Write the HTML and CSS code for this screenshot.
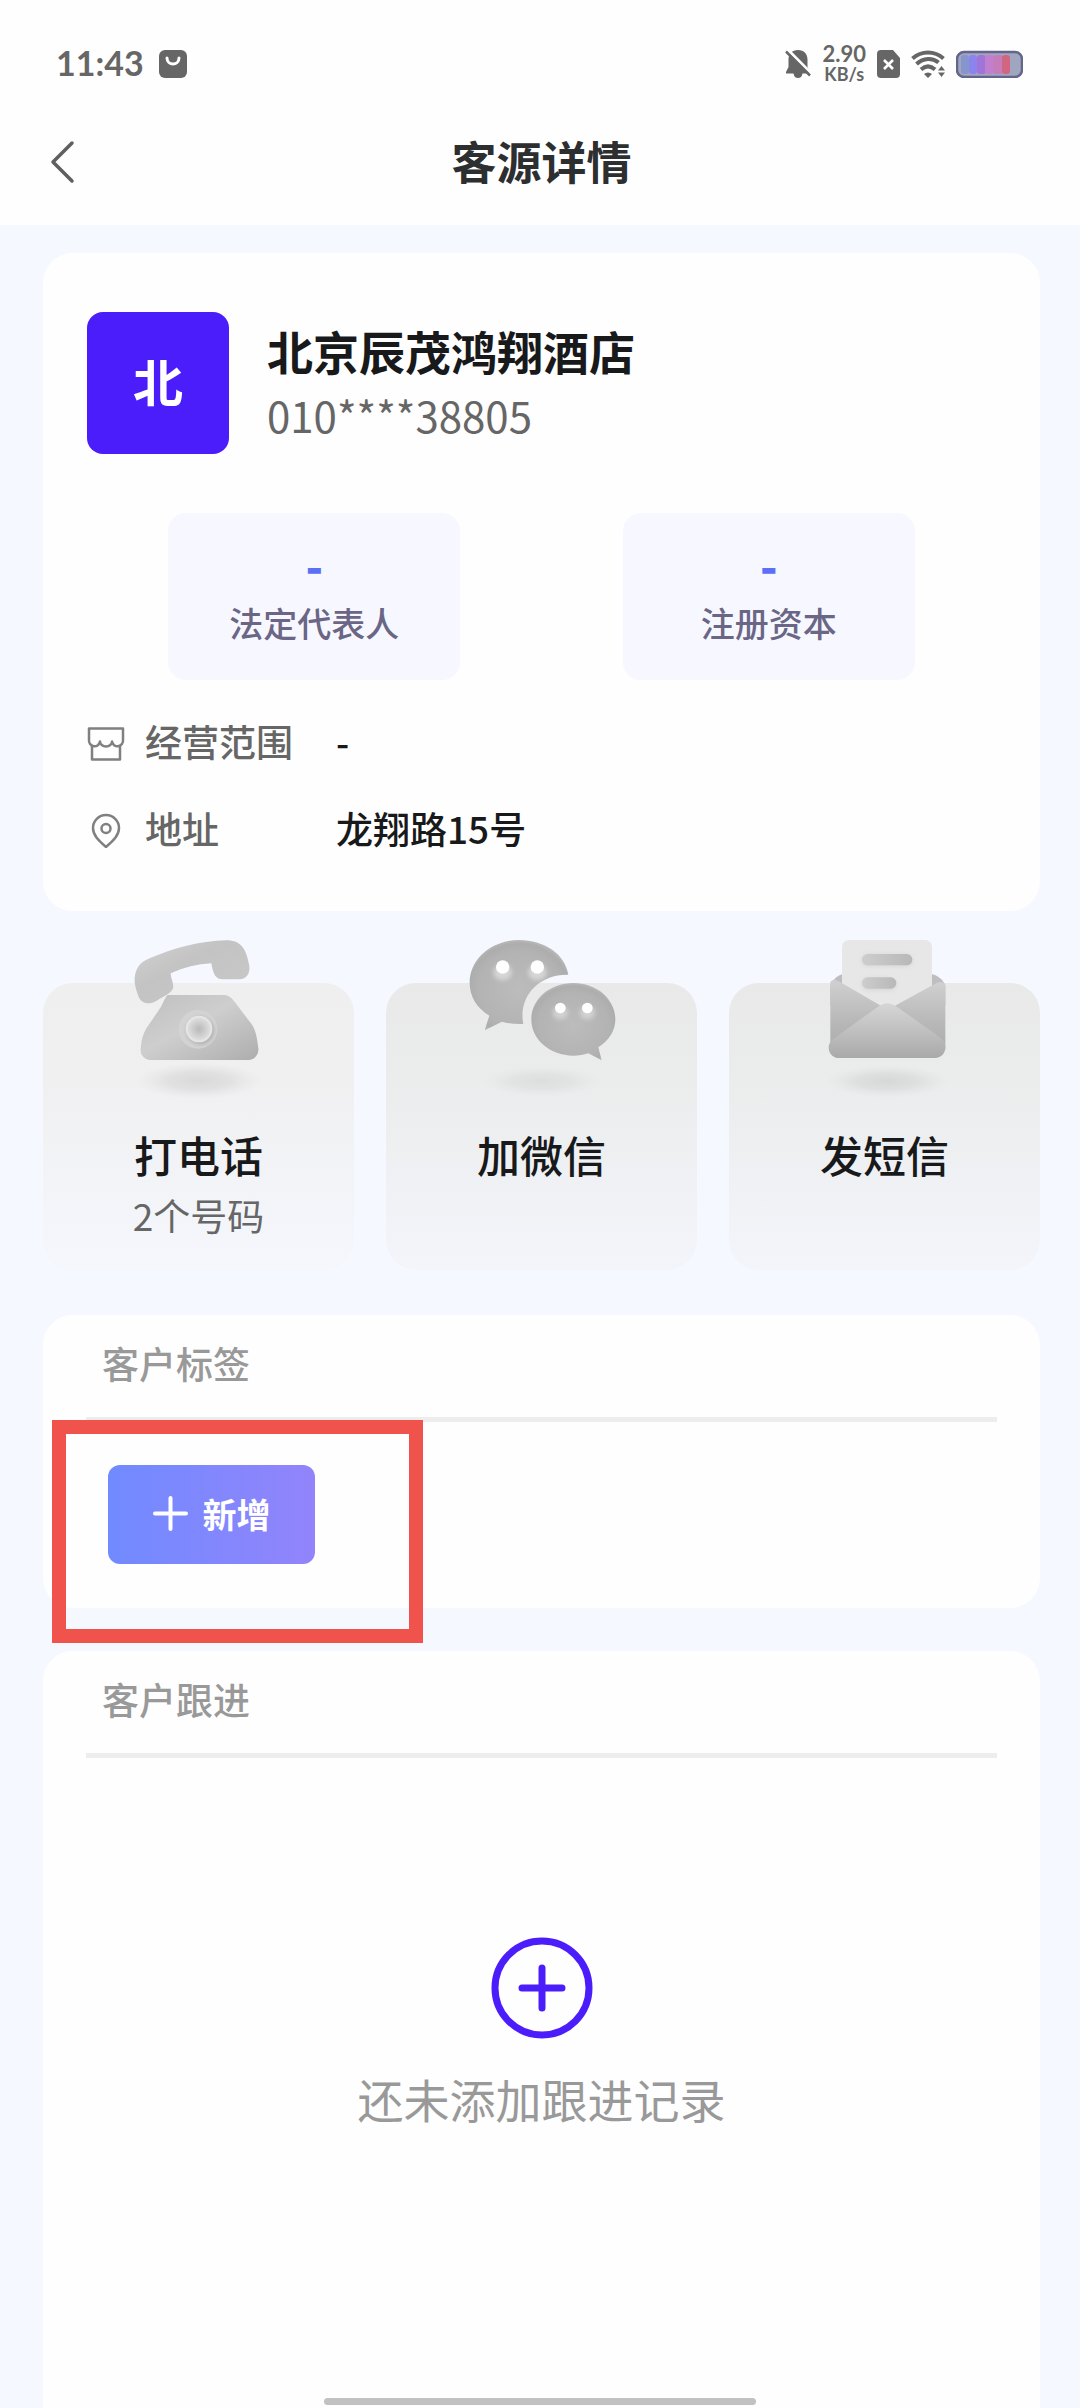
FILE: index.html
```html
<!DOCTYPE html>
<html lang="zh-CN">
<head>
    <meta charset="UTF-8">
    <meta name="viewport" content="width=device-width, initial-scale=1.0">
    <title>客源详情</title>
    <link rel="stylesheet" href="styles.css">
</head>
<body>
    <header class="top">
        <div class="status-bar">
            <span class="time">11:43</span>
            <svg width="28" height="28" viewBox="0 0 28 28">
                <rect width="28" height="28" rx="6" fill="#666"/>
                <path d="M8 8c0 8 12 8 12 0" fill="none" stroke="#fff" stroke-width="3" stroke-linecap="round"/>
            </svg>
            <div class="status-icons">
                <svg width="26" height="30" viewBox="0 0 26 30">
                    <path d="M13 1c6 0 9.500 4 9.500 9.500V18l2.500 5v1.500H17.500C17 27.500 15.500 29 13 29s-4-1.500-4.500-4.500H1V23l2.500-5v-7.500C3.500 5 7 1 13 1z" fill="#666"/>
                    <path d="M2 0l25 25" stroke="#fff" stroke-width="3"/>
                    <path d="M1 2.500l24 24" stroke="#666" stroke-width="2.500"/>
                </svg>
                <div class="speed">
                    <span class="speed-value">2.90</span>
                    <span class="speed-unit">KB/s</span>
                </div>
                <svg width="23" height="28" viewBox="0 0 23 28">
                    <path d="M4 0h12l7 8v16a4 4 0 0 1-4 4H4a4 4 0 0 1-4-4V4a4 4 0 0 1 4-4z" fill="#666"/>
                    <path d="M7 10l9 9M16 10l-9 9" stroke="#fff" stroke-width="2.600"/>
                </svg>
                <svg width="34" height="28" viewBox="0 0 34 28">
                    <path d="M1.500 8.500c9-8 22-8 31 0M5.500 14c7-6.500 16-6.500 22-1.500M10 19.500c4.500-4 9.500-4 14 0" fill="none" stroke="#666" stroke-width="4"/>
                    <path d="M13 24c2.500-2 5.500-2 8 0l-4 4zM27 20.500l3.500-4.500 3.500 4.500zM27 22.500h7L30.500 27z" fill="#666"/>
                </svg>
                <svg width="67" height="28" viewBox="0 0 67 28">
                    <rect x="1" y="2" width="65" height="25" rx="7" fill="#a0a6c0" stroke="#64658a" stroke-width="2.500"/>
                    <rect x="5" y="5" width="8" height="19" rx="3" fill="#8696cc"/>
                    <rect x="13" y="5" width="8" height="19" rx="3" fill="#8b84ec"/>
                    <rect x="21" y="5" width="9" height="19" rx="3" fill="#a174d8"/>
                    <rect x="29" y="5" width="9" height="19" rx="3" fill="#c27fd0"/>
                    <rect x="37" y="5" width="10" height="19" rx="3" fill="#c47cba"/>
                    <rect x="46" y="5" width="8" height="19" rx="3" fill="#d0667f"/>
                </svg>
            </div>
        </div>
        <nav class="nav-bar">
            <button type="button" class="back-btn" aria-label="返回">
                <svg width="26" height="46" viewBox="0 0 26 46">
                    <path d="M22 4L3 23l19 19" fill="none" stroke="#5f5f5f" stroke-width="3.500" stroke-linecap="round" stroke-linejoin="round"/>
                </svg>
            </button>
            <h1>客源详情</h1>
        </nav>
    </header>

    <main>
        <section class="card profile">
            <div class="company">
                <div class="avatar">北</div>
                <div>
                    <h2>北京辰茂鸿翔酒店</h2>
                    <p class="phone">010****38805</p>
                </div>
            </div>
            <div class="stats">
                <div class="stat">
                    <strong>-</strong>
                    <span>法定代表人</span>
                </div>
                <div class="stat">
                    <strong>-</strong>
                    <span>注册资本</span>
                </div>
            </div>
            <dl class="info">
                <dt>
                    <svg width="38" height="38" viewBox="0 0 38 38" fill="none" stroke="#808080" stroke-width="2.500" stroke-linejoin="round">
                        <path d="M2 5.500h34V17a5.500 5.500 0 0 1-11 1.500 6 5 0 0 1-12 0A5.500 5.500 0 0 1 2 17z"/>
                        <path d="M5 22v14.500h28V22"/>
                    </svg>
                    经营范围
                </dt>
                <dd>-</dd>
                <dt>
                    <svg width="38" height="38" viewBox="0 0 38 38" fill="none" stroke="#808080" stroke-width="2.500" stroke-linejoin="round">
                        <path d="M19 37C11 30 6 25 6 18a13 13 0 0 1 26 0c0 7-5 12-13 19z"/>
                        <circle cx="19" cy="18.500" r="4.500"/>
                    </svg>
                    地址
                </dt>
                <dd>龙翔路15号</dd>
            </dl>
        </section>

        <section class="actions">
            <button type="button" class="action action-call">
                <svg width="150" height="160" viewBox="280 60 450 480">
                    <defs>
                        <linearGradient id="handset" x1="0" y1="0" x2="1" y2="1">
                            <stop offset="0" stop-color="#d2d2d2"/>
                            <stop offset="0.400" stop-color="#c3c3c3"/>
                            <stop offset="1" stop-color="#c9c9c9"/>
                        </linearGradient>
                        <linearGradient id="phoneBase" x1="0" y1="0" x2="1" y2="1">
                            <stop offset="0" stop-color="#bfbfbf"/>
                            <stop offset="0.450" stop-color="#cecece"/>
                            <stop offset="1" stop-color="#adadad"/>
                        </linearGradient>
                        <radialGradient id="dial">
                            <stop offset="0" stop-color="#b9b9b9"/>
                            <stop offset="1" stop-color="#dedede"/>
                        </radialGradient>
                        <radialGradient id="shadow">
                            <stop offset="0" stop-color="#c9c9ca" stop-opacity="0.600"/>
                            <stop offset="0.500" stop-color="#cfcfd0" stop-opacity="0.450"/>
                            <stop offset="1" stop-color="#dcdcde" stop-opacity="0"/>
                        </radialGradient>
                        <filter id="softBlur" x="-50%" y="-50%" width="200%" height="200%">
                            <feGaussianBlur stdDeviation="6"/>
                        </filter>
                    </defs>
                    <ellipse cx="505" cy="485" rx="190" ry="55" fill="url(#shadow)"/>
                    <path d="M312 190c-2-34 12-60 45-72 70-30 150-52 230-54 45 0 60 26 69 77 3 22-10 40-28 40h-52c-20 0-28-12-34-48-42 2-82 12-122 30 0 14 8 26 8 42-4 16-20 22-50 40-26 14-46 8-54-12-6-14-10-28-12-43z" fill="url(#handset)"/>
                    <path d="M410 228h165c20 0 28 8 38 22l50 66c12 18 16 38 20 72 2 20-12 35-30 35H362c-20 0-34-14-32-33 2-20 4-46 24-72l30-44c12-16 14-30 26-46z" fill="url(#phoneBase)"/>
                    <circle cx="502" cy="331" r="58" fill="#d3d3d3"/>
                    <circle cx="509" cy="335" r="40" fill="#aaa" filter="url(#softBlur)"/>
                    <circle cx="505" cy="330" r="40" fill="#e5e5e5"/>
                    <circle cx="505" cy="330" r="34" fill="url(#dial)"/>
                </svg>
                <span class="action-name">打电话</span>
                <span class="action-note">2个号码</span>
            </button>
            <button type="button" class="action">
                <svg width="150" height="160" viewBox="290 60 450 480">
                    <defs>
                        <radialGradient id="bubble" cx="0.500" cy="0.550" r="0.600">
                            <stop offset="0" stop-color="#bcbcbc"/>
                            <stop offset="0.700" stop-color="#b3b3b3"/>
                            <stop offset="0.850" stop-color="#adadad"/>
                            <stop offset="1" stop-color="#c6c6c6"/>
                        </radialGradient>
                    </defs>
                    <ellipse cx="515" cy="487" rx="180" ry="46" fill="url(#shadow)" opacity="0.700"/>
                    <path d="M594 167C584 105 522 63 446 63c-82 0-148 56-148 128 0 42 22 76 59 99l-14 44 52-26c20 6 40 8 64 7-16-80 44-150 135-148z" fill="url(#bubble)"/>
                    <ellipse cx="397" cy="160" rx="28" ry="24" fill="#d6d6d6" filter="url(#softBlur)"/>
                    <ellipse cx="501" cy="160" rx="28" ry="24" fill="#d6d6d6" filter="url(#softBlur)"/>
                    <circle cx="397" cy="144" r="20" fill="#fff"/>
                    <circle cx="501" cy="144" r="20" fill="#fff"/>
                    <path d="M609 192c-70 0-126 48-126 109s56 109 126 109c16 0 30-2 45-7l40 21-10-39c33-22 51-50 51-84 0-61-56-109-126-109z" fill="url(#bubble)"/>
                    <ellipse cx="570" cy="281" rx="23" ry="20" fill="#d2d2d2" filter="url(#softBlur)"/>
                    <ellipse cx="651" cy="281" rx="23" ry="20" fill="#d2d2d2" filter="url(#softBlur)"/>
                    <circle cx="570" cy="267" r="16" fill="#fff"/>
                    <circle cx="651" cy="267" r="16" fill="#fff"/>
                </svg>
                <span class="action-name">加微信</span>
            </button>
            <button type="button" class="action">
                <svg width="150" height="160" viewBox="299 60 450 480">
                    <defs>
                        <linearGradient id="sideFlap" x1="0" y1="0" x2="0" y2="1">
                            <stop offset="0" stop-color="#d0d0d0"/>
                            <stop offset="0.600" stop-color="#b8b8b8"/>
                            <stop offset="1" stop-color="#acacac"/>
                        </linearGradient>
                        <linearGradient id="frontFlap" x1="0" y1="0" x2="0" y2="1">
                            <stop offset="0" stop-color="#d6d6d6"/>
                            <stop offset="0.500" stop-color="#c0c0c0"/>
                            <stop offset="1" stop-color="#a9a9a9"/>
                        </linearGradient>
                        <linearGradient id="textLine" x1="0" y1="0" x2="1" y2="0">
                            <stop offset="0" stop-color="#cdcdcd"/>
                            <stop offset="1" stop-color="#b8b8b8"/>
                        </linearGradient>
                    </defs>
                    <ellipse cx="530" cy="487" rx="185" ry="48" fill="url(#shadow)"/>
                    <path d="M360 200c2-12 20-30 35-34h270c18 2 36 20 40 34v60H360z" fill="#bebec1"/>
                    <rect x="395" y="63" width="270" height="230" rx="20" fill="#e7e7e7"/>
                    <rect x="455" y="106" width="151" height="36" rx="18" fill="#d6d6d6" filter="url(#softBlur)"/>
                    <rect x="455" y="178" width="103" height="36" rx="18" fill="#d6d6d6" filter="url(#softBlur)"/>
                    <rect x="455" y="105" width="151" height="34" rx="17" fill="url(#textLine)"/>
                    <rect x="455" y="175" width="103" height="34" rx="17" fill="url(#textLine)"/>
                    <path d="M360 190c4-8 14-10 28-2l144 84-144 94-28 24z" fill="url(#sideFlap)"/>
                    <path d="M705 198c-4-10-16-12-28-5l-145 79 150 94 23 24z" fill="url(#sideFlap)"/>
                    <path d="M355 385c0-12 6-20 18-28l130-94c20-14 36-14 56 0l128 90c12 8 18 18 18 32 0 18-12 32-30 32H383c-16 0-28-14-28-32z" fill="url(#frontFlap)"/>
                </svg>
                <span class="action-name">发短信</span>
            </button>
        </section>

        <section class="card tags">
            <h3>客户标签</h3>
            <button type="button" class="add-btn">
                <svg width="35" height="35" viewBox="0 0 35 35">
                    <path d="M17.500 2v31M2 17.500h31" stroke="#fff" stroke-width="4" stroke-linecap="round"/>
                </svg>
                新增
            </button>
            <!-- 红框标注新增按钮 -->
            <div class="highlight"></div>
        </section>

        <section class="card follow">
            <h3>客户跟进</h3>
            <div class="empty">
                <button type="button" class="add-record" aria-label="添加跟进记录">
                    <svg width="102" height="102" viewBox="0 0 102 102" fill="none" stroke="#4b1dfb" stroke-width="7" stroke-linecap="round">
                        <circle cx="51" cy="51" r="47"/>
                        <path d="M51 31v40M31 51h40"/>
                    </svg>
                </button>
                <p>还未添加跟进记录</p>
            </div>
        </section>
    </main>
    <div class="home-bar"></div>
</body>
</html>
```

FILE: styles.css
```css
* {
    box-sizing: border-box;
}
body {
    display: flex;
    flex-direction: column;
    min-height: 100vh;
    margin: 0;
    background-color: #f5f8ff;
    color: #18191b;
    font-family: "Noto Sans CJK SC", "Noto Sans", sans-serif;
    font-weight: 500;
}
h1, h2, h3, p, dl, dd {
    margin: 0;
}
svg {
    display: block;
    flex: none;
}
button {
    padding: 0;
    border: none;
    background: none;
    color: inherit;
    font-family: inherit;
    font-weight: inherit;
    cursor: pointer;
}
.top {
    background-color: #fefefe;
}
.status-bar {
    display: flex;
    align-items: center;
    gap: 15px;
    height: 99px;
    padding: 29px 57px 0 56px;
    color: #666;
}
.time {
    padding-bottom: 3px;
    font-family: Lato, sans-serif;
    font-size: 34px;
    font-weight: 700;
    line-height: 40px;
}
.status-icons {
    display: flex;
    align-items: center;
    gap: 11px;
    margin-left: auto;
}
.speed {
    display: flex;
    flex-direction: column;
    align-items: center;
    font-family: Lato, sans-serif;
    font-weight: 700;
    line-height: 20px;
}
.speed-value {
    font-size: 22px;
}
.speed-unit {
    font-size: 18px;
}
.nav-bar {
    display: grid;
    grid-template-columns: 50px 1fr 50px;
    align-items: center;
    height: 126px;
    padding: 0 47px 0 50px;
}
h1 {
    padding-bottom: 2px;
    color: #2d2e30;
    font-size: 45px;
    font-weight: 700;
    line-height: 60px;
    text-align: center;
}
main {
    display: flex;
    flex-direction: column;
    flex: 1;
    padding: 28px 40px 0 43px;
}
.card {
    background-color: #fefefe;
    border-radius: 30px;
}
.profile {
    padding: 59px 44px 39px;
}
.company {
    display: flex;
    align-items: center;
    gap: 38px;
}
.avatar {
    display: flex;
    align-items: center;
    justify-content: center;
    width: 142px;
    height: 142px;
    padding-bottom: 6px;
    border-radius: 16px;
    background-color: #4b1dfb;
    color: #fff;
    font-size: 50px;
    font-weight: 700;
}
h2 {
    margin-bottom: 2px;
    font-size: 46px;
    font-weight: 700;
    line-height: 62px;
}
.phone {
    color: #666;
    font-size: 42px;
    font-weight: 400;
    line-height: 64px;
}
.stats {
    display: flex;
    justify-content: space-around;
    margin-top: 59px;
}
.stat {
    display: flex;
    flex-direction: column;
    align-items: center;
    width: 292px;
    padding: 22px 0 28px;
    border-radius: 18px;
    background-color: #f7f8ff;
    color: #6b6685;
    font-size: 34px;
    line-height: 59px;
}
.stat strong {
    color: #5b70f6;
    font-size: 46px;
    font-weight: 900;
    line-height: 58px;
}
.info {
    display: grid;
    grid-template-columns: 249px 1fr;
    margin-top: 18px;
    font-size: 37px;
    line-height: 87px;
}
.info dt {
    display: flex;
    align-items: center;
    gap: 20px;
    color: #666;
}
.actions {
    display: grid;
    grid-template-columns: repeat(3, 1fr);
    gap: 32px;
    margin-top: 72px;
}
.action {
    display: flex;
    flex-direction: column;
    align-items: center;
    justify-content: flex-start;
    min-height: 287px;
    border-radius: 30px;
    background: linear-gradient(#e9e9e9, #ebecec 35%, #f4f5fb);
}
.action-call {
    background: linear-gradient(#efefef, #f0f0f1 35%, #f5f7fd);
}
.action svg {
    margin-top: -44px;
}
.action-name {
    margin-top: 24px;
    font-size: 43px;
    line-height: 62px;
}
.action-note {
    color: #666;
    font-size: 37px;
    font-weight: 400;
    line-height: 60px;
}
h3 {
    padding: 18px 16px 24px;
    border-bottom: 5px solid #ededed;
    color: #999;
    font-size: 37px;
    font-weight: 500;
    line-height: 60px;
}
.tags {
    position: relative;
    margin-top: 45px;
    padding: 0 43px 44px;
}
.add-btn {
    display: flex;
    align-items: center;
    justify-content: center;
    gap: 15px;
    width: 207px;
    height: 99px;
    margin: 43px 0 0 22px;
    padding-bottom: 2px;
    border-radius: 12px;
    background: linear-gradient(to right, #718aff, #9284fb);
    color: #fff;
    font-size: 34px;
    font-weight: 700;
}
.highlight {
    position: absolute;
    top: 105px;
    left: 9px;
    width: 371px;
    height: 223px;
    border: 14px solid #ef534b;
    pointer-events: none;
}
.follow {
    flex: 1;
    margin-top: 43px;
    padding: 0 43px;
    border-radius: 30px 30px 0 0;
}
.empty {
    display: flex;
    flex-direction: column;
    align-items: center;
    gap: 27px;
    padding: 179px 0 80px;
    color: #999;
    font-size: 46px;
    font-weight: 400;
    line-height: 64px;
}
.home-bar {
    position: fixed;
    bottom: 3px;
    left: 30%;
    width: 40%;
    height: 7px;
    border-radius: 4px;
    background-color: #c1c1c1;
}
```
